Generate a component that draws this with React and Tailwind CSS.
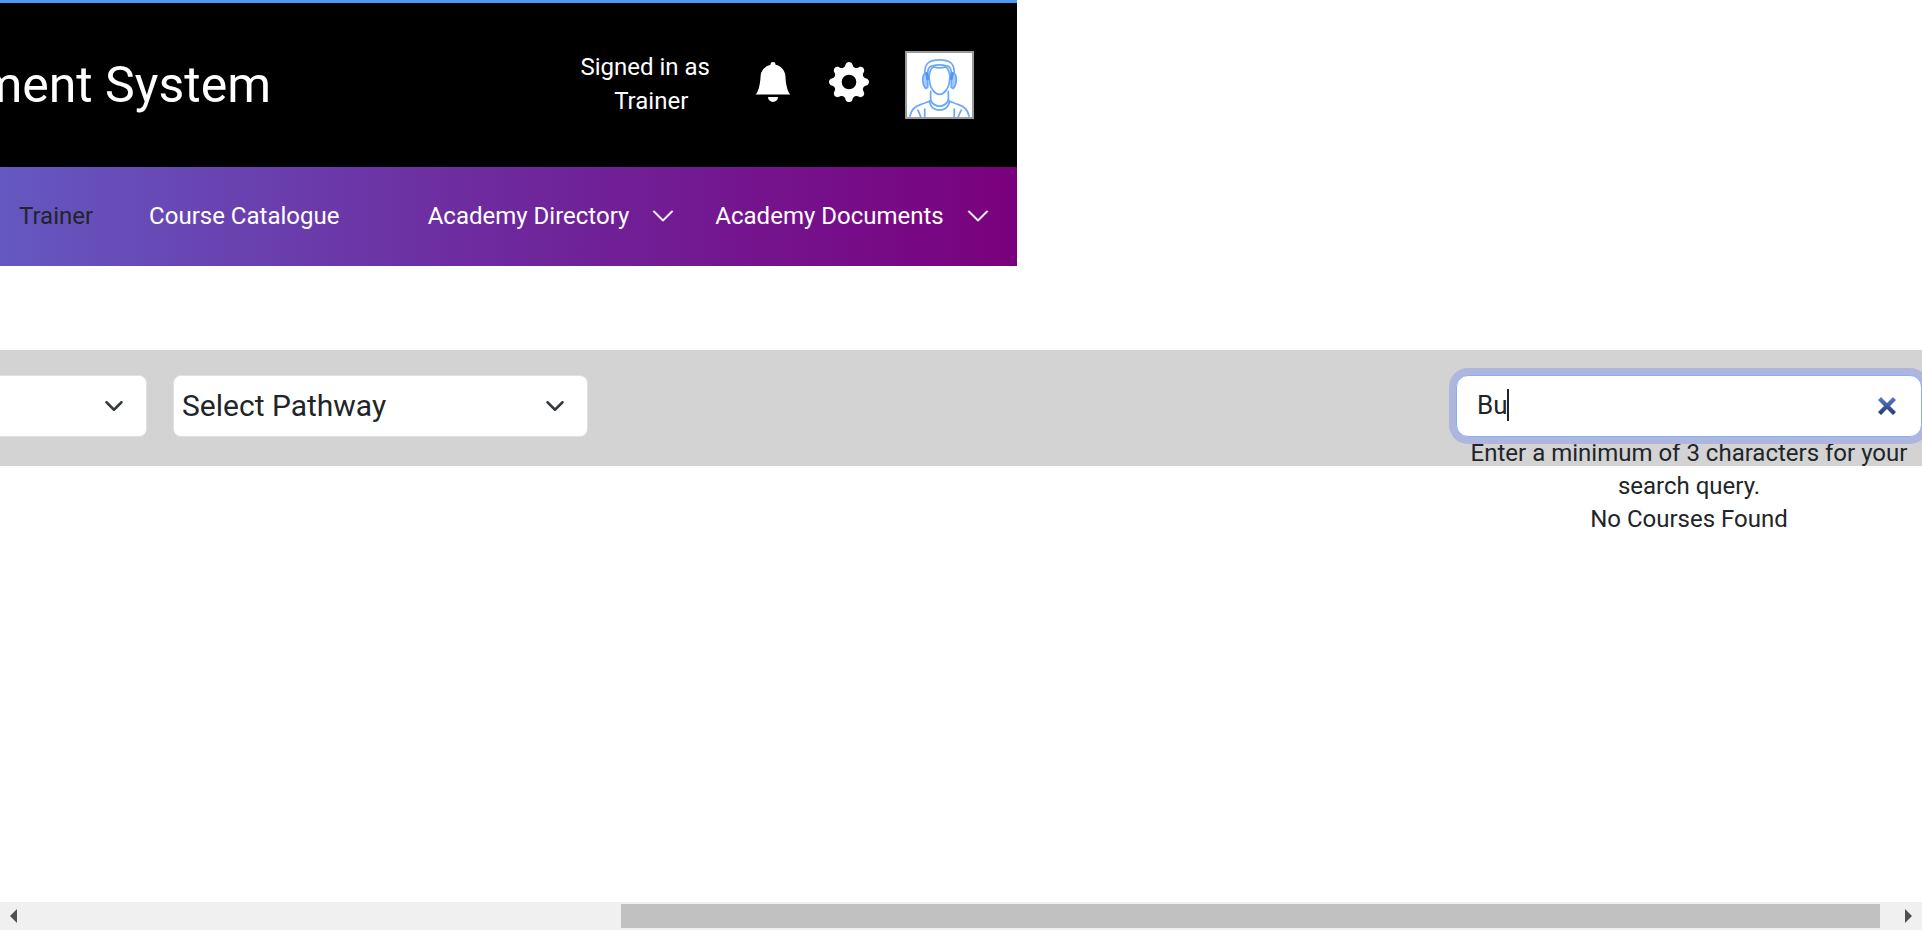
import { useState } from "react";
import { BsBellFill, BsGearFill, BsChevronDown } from "react-icons/bs";

function Avatar() {
  return (
    <svg viewBox="0 0 66 65" className="block h-full w-full" fill="none" stroke="#6ba8fb" strokeWidth="1.8" strokeLinecap="round" aria-hidden="true">
      <path d="M18 20C18 10 23 7 33 7s15 3 15 13" />
      <path d="M21 21c0-5 2-8 5-8 4-1 10-1 14 0 3 0 5 3 5 8" />
      <path d="M23 20c1-3 2-5 4-6 3 1 9 1 12 0 2 1 3 3 4 6 1 3 1 6 0 10-1 6-5 12-10 12s-9-6-10-12c-1-4-1-7 0-10z" />
      <path d="M19 20c-2 1-3 3-3 7s1 7 3 9l2-1V21z" fill="#a9cbfd" />
      <path d="M47 20c2 1 3 3 3 7s-1 7-3 9l-2-1V21z" fill="#a9cbfd" />
      <path d="M20 21l1 5M46 21l-1 5" strokeWidth="3" stroke="#4d94f8" />
      <path d="M24 39v9c-2 2-5 2-9 4-7 2-11 6-12 12M42 39v9c2 2 5 2 9 4 7 2 11 6 12 12" />
      <path d="M23 50c1 5 5 8 10 8s9-3 10-8M24 48c2 4 4 6 9 6s7-2 9-6" />
      <path d="M18 57v8M48 57v8M11 58c1 2 2 4 3 7M55 58c-1 2-2 4-3 7" />
    </svg>
  );
}

function NavMenu({ children }) {
  return (
    <button type="button" className="flex items-center gap-[22px]">
      {children}
      <BsChevronDown className="size-6 stroke-[0.4]" aria-hidden="true" />
    </button>
  );
}

function Header() {
  return (
    <header className="w-[52.9%] border-t-3 border-[#4d9bf0] text-white">
      <div className="flex h-[164px] items-center justify-between bg-black pr-[43px]">
        <h1 className="flex w-[271px] justify-end overflow-hidden text-[50px] leading-[60px] whitespace-nowrap">
          ment System
        </h1>
        <div className="flex items-center">
          <p className="w-[133px] pb-0.5 text-center text-2xl leading-[34px]">
            Signed in as
            <span className="block pl-3">Trainer</span>
          </p>
          <button type="button" aria-label="Notifications" className="ml-[41px] pb-1.5">
            <BsBellFill className="size-10" />
          </button>
          <button type="button" aria-label="Settings" className="ml-9 pb-1.5">
            <BsGearFill className="size-10" />
          </button>
          <button type="button" aria-label="Profile" className="ml-9 h-[68px] w-[69px] border-2 border-[#9b9b9b] bg-white">
            <Avatar />
          </button>
        </div>
      </div>
      <nav className="flex h-[99px] items-center justify-between bg-linear-to-r/srgb from-[#6558c0] via-[#6e289d] to-[#7a007d] pr-[27px] pb-0.5 pl-[19px] text-2xl">
        <div className="flex items-center gap-14">
          <span className="text-[#212529]">Trainer</span>
          <a href="#catalogue">Course Catalogue</a>
        </div>
        <div className="flex items-center gap-10">
          <NavMenu>Academy Directory</NavMenu>
          <NavMenu>Academy Documents</NavMenu>
        </div>
      </nav>
    </header>
  );
}

function FilterSelect({ label, option }) {
  return (
    <div className="grid h-[62px] w-[415px] shrink-0 items-center">
      <select aria-label={label} className="col-start-1 row-start-1 h-full w-full appearance-none rounded-lg border border-[#dee2e6] bg-white pb-0.5 pl-2 text-[30px]">
        <option>{option}</option>
      </select>
      <svg viewBox="0 0 16 16" className="pointer-events-none col-start-1 row-start-1 mr-[23px] size-5 justify-self-end" fill="none" stroke="#343a40" strokeWidth="2" strokeLinecap="round" strokeLinejoin="round" aria-hidden="true">
        <path d="m2 5 6 6 6-6" />
      </svg>
    </div>
  );
}

function Search() {
  const [query, setQuery] = useState("Bu");
  return (
    <div className="w-[466px]">
      <div className="relative">
        <input
          type="text"
          aria-label="Search courses"
          value={query}
          onChange={(e) => setQuery(e.target.value)}
          className="block h-[62px] w-full rounded-xl border border-[#86b0fe] bg-white pr-16 pb-0.5 pl-5 text-[26px] shadow-[0_0_0_7px_#aeb6de] outline-none"
        />
        <span className="absolute top-3.5 left-[51px] h-8 w-0.5 bg-[#212529]" />
        <button type="button" aria-label="Clear" onClick={() => setQuery("")} className="absolute top-[22px] right-[26px]">
          <svg viewBox="0 0 18 18" className="size-[18px]" aria-hidden="true">
            <defs>
              <linearGradient id="clear" x1="0" y1="0" x2="0" y2="1">
                <stop offset="0" stopColor="#5580cf" />
                <stop offset="1" stopColor="#26376b" />
              </linearGradient>
            </defs>
            <path fill="url(#clear)" d="M3 0 9 6 15 0 18 3 12 9 18 15 15 18 9 12 3 18 0 15 6 9 0 3z" />
          </svg>
        </button>
      </div>
      <p className="text-center text-2xl leading-[33px]">
        Enter a minimum of 3 characters for your search query.
        <br />
        No Courses Found
      </p>
    </div>
  );
}

function ScrollBar() {
  return (
    <div className="flex h-7 items-center justify-between bg-[#f0f0f0] px-2.5" aria-hidden="true">
      <svg viewBox="0 0 7 14" className="h-3.5 w-[7px]" fill="#505050"><path d="M7 0v14L0 7z" /></svg>
      <div className="mr-[25px] ml-auto h-6 w-[66.2%] bg-[#c1c1c1]" />
      <svg viewBox="0 0 7 14" className="h-3.5 w-[7px]" fill="#505050"><path d="M0 0v14l7-7z" /></svg>
    </div>
  );
}

export default function App() {
  return (
    <div className="flex min-h-screen flex-col overflow-hidden bg-white font-['Roboto',sans-serif] text-[#212529]">
      <Header />
      <main className="mt-[84px] flex-1">
        <div className="flex h-[116px] items-start justify-between bg-[#d3d3d3] pt-[25px]">
          <div className="flex gap-[26px]">
            <div className="flex w-[147px] justify-end overflow-hidden">
              <FilterSelect label="Category" option="" />
            </div>
            <FilterSelect label="Pathway" option="Select Pathway" />
          </div>
          <Search />
        </div>
      </main>
      <ScrollBar />
    </div>
  );
}
